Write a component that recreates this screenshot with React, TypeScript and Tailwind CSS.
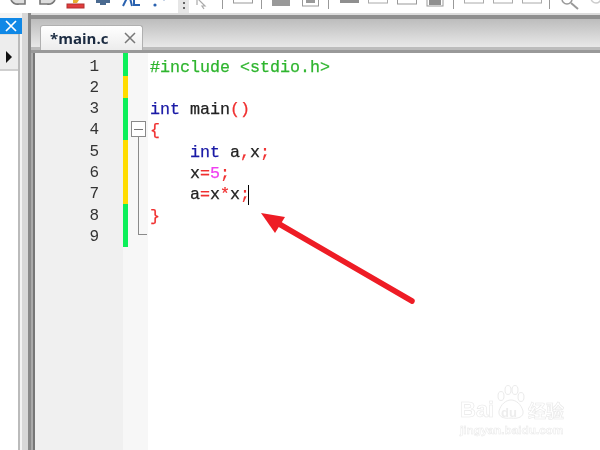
const K = ({ children }: { children: React.ReactNode }) => <span className="text-[#1a1aa6]">{children}</span>;
const R = ({ children }: { children: React.ReactNode }) => <span className="text-[#f03030]">{children}</span>;
const D = ({ children }: { children: React.ReactNode }) => <span className="text-[#222]">{children}</span>;

const rows: { n: number; bar: string; code: React.ReactNode }[] = [
  { n: 1, bar: "bg-[#0cf05a]", code: <span className="text-[#2fb52f]">#include &lt;stdio.h&gt;</span> },
  { n: 2, bar: "bg-[#ffdc00]", code: null },
  { n: 3, bar: "bg-[#0cf05a]", code: <><K>int</K> <D>main</D><R>()</R></> },
  { n: 4, bar: "bg-[#0cf05a]", code: <R>{"{"}</R> },
  { n: 5, bar: "bg-[#ffdc00]", code: <>{"    "}<K>int</K> <D>a</D><R>,</R><D>x</D><R>;</R></> },
  { n: 6, bar: "bg-[#ffdc00]", code: <>{"    "}<D>x</D><R>=</R><span className="text-[#f040f0]">5</span><R>;</R></> },
  {
    n: 7,
    bar: "bg-[#ffdc00]",
    code: (
      <>
        {"    "}<D>a</D><R>=</R><D>x</D><R>*</R><D>x</D><R>;</R>
        <span className="inline-block w-px h-[20px] -ml-[2px] bg-black align-middle" />
      </>
    ),
  },
  { n: 8, bar: "bg-[#0cf05a]", code: <R>{"}"}</R> },
  { n: 9, bar: "bg-[#0cf05a]", code: null },
];

function Toolbar() {
  return (
    <div className="h-[13px] shrink-0 bg-white flex items-end overflow-hidden relative">
      <svg width="600" height="13" viewBox="0 0 600 13" className="shrink-0" fill="none">
        <path d="M11 0 Q14 5 19 4 H25 V0" stroke="#777" strokeWidth="1.6" fill="#ddd" />
        <path d="M55 0 Q52 5 47 4 H40 V0" stroke="#777" strokeWidth="1.6" fill="#ddd" />
        <rect x="67" y="4" width="17" height="4" fill="#e23b3b" stroke="#b03030" />
        <path d="M73 0 H79 L77 3 H73 Z" fill="#e8b030" />
        <path d="M96 -1 H110 V3 H106 V5 H100 V3 H96 Z" fill="#4a6a90" />
        <path d="M123 6 L127 -2 M132 6 L130 -2 M134 -2 V5 H140" stroke="#2a62b0" strokeWidth="2" />
        <circle cx="155" cy="5" r="1.6" fill="#2a62b0" />
        <circle cx="164" cy="0" r="1" fill="#b8c8e0" />
        <path d="M197 -2 L205 6 L202 6 L204 9 M197 -2 V5" stroke="#aaa" strokeWidth="1.2" />
        <rect x="233.5" y="-4" width="19" height="7" stroke="#999" />
        <rect x="272" y="-4" width="18" height="10" fill="#999" />
        <rect x="302.5" y="-4" width="16" height="10" stroke="#999" fill="#fff" />
        <rect x="306" y="-4" width="9" height="7" fill="#999" />
        <rect x="340" y="-4" width="19" height="7" fill="#8f8f8f" />
        <rect x="368.5" y="-4" width="19" height="7" stroke="#aaa" />
        <rect x="397.5" y="-4" width="19" height="8" stroke="#999" />
        <rect x="427" y="-4" width="16" height="10" stroke="#999" />
        <rect x="429" y="-4" width="12" height="9" fill="#8f8f8f" />
        <rect x="464.5" y="-4" width="19" height="7" stroke="#aaa" />
        <rect x="493.5" y="-4" width="19" height="7" stroke="#aaa" />
        <rect x="522.5" y="-4" width="19" height="7" stroke="#aaa" />
        <circle cx="567" cy="-1" r="5" stroke="#999" strokeWidth="1.5" />
        <path d="M571 3 L578 9" stroke="#999" strokeWidth="2" />
        <circle cx="596" cy="-2" r="5" stroke="#ccc" strokeWidth="1.5" />
        <path d="M222.5 0 V9 M261.5 0 V9 M328.5 0 V9 M453.5 0 V9 M549.5 0 V9" stroke="#999" />
      </svg>
      <div className="absolute left-[178px] top-0 w-[11px] h-[13px] bg-[#e6e6e6] flex flex-col items-center pt-[2px] gap-[3px]">
        <div className="w-[2px] h-[2px] bg-[#666]" />
        <div className="w-[2px] h-[2px] bg-[#666]" />
      </div>
    </div>
  );
}

function Sidebar() {
  return (
    <div className="w-[31px] shrink-0 flex">
      <div className="w-[22px] shrink-0 flex flex-col bg-white">
        <div className="h-[5px] bg-[#f4f4f4]" />
        <div className="h-[16px] bg-[#1088e6] flex items-center justify-center">
          <svg width="12" height="12" viewBox="0 0 12 12"><path d="M1 1 L11 11 M11 1 L1 11" stroke="#fff" strokeWidth="1.7" /></svg>
        </div>
        <div className="flex-1 flex">
          <div className="w-[18px] bg-white flex flex-col">
            <div className="h-[37px] bg-[#ededed] flex items-center justify-center border-t border-[#ddd] border-b-2 border-b-[#cfcfcf] pt-[9px]">
              <svg width="8" height="12" viewBox="0 0 8 12"><path d="M1 0 L7 6 L1 12 Z" fill="#111" /></svg>
            </div>
          </div>
          <div className="w-[2px] bg-[#bbb]" />
          <div className="w-[2px] bg-[#f4f4f4]" />
        </div>
      </div>
      <div className="w-[6px] bg-[#d8d8d8]" />
      <div className="w-[3px] bg-[#8a8a8a]" />
    </div>
  );
}

function TabStrip() {
  return (
    <div className="h-[40px] shrink-0 flex flex-col">
      <div className="h-[2px] bg-[#dcdcdc]" />
      <div className="h-[4px] bg-[#8f8f8f]" />
      <div className="flex-1 bg-gradient-to-b from-[#bdbdbd] to-[#e8e8e8] flex items-end pl-[9px]">
        <div className="relative z-10 w-[103px] h-[25px] -mb-[3px] rounded-t-[3px] border border-b-0 border-[#b0b0b0] bg-gradient-to-b from-white to-[#ececec] flex items-center pl-[9px] pr-[6px] justify-between">
          <span className="font-['Open_Sans','Liberation_Sans',sans-serif] font-bold text-[15px] text-[#1a2a40]">*main.c</span>
          <svg width="12" height="12" viewBox="0 0 12 12"><path d="M1 1 L11 11 M11 1 L1 11" stroke="#777" strokeWidth="1.5" /></svg>
        </div>
      </div>
      <div className="h-[3px] bg-[#bcbcbc]" />
      <div className="h-[3px] bg-[#999]" />
    </div>
  );
}

function Editor() {
  return (
    <div className="flex-1 relative flex bg-white overflow-hidden">
      <div className="w-[2px] shrink-0 bg-[#aaa]" />
      <div className="w-[2px] shrink-0 bg-[#777]" />
      <div className="w-[88px] shrink-0 bg-[#f0f0f0] pt-[3.5px]">
        {rows.map((r) => (
          <div key={r.n} className="h-[21.3px] pr-[24px] text-right font-['Liberation_Mono',monospace] text-[16px] leading-[21.3px] text-[#333]">
            {r.n}
          </div>
        ))}
      </div>
      <div className="w-[5px] shrink-0 flex flex-col">
        {rows.map((r) => (
          <div key={r.n} className={`${r.bar} h-[21.3px] first:h-[23.3px]`} />
        ))}
        <div className="flex-1 bg-[#f7f7f7]" />
      </div>
      <div className="w-[20px] shrink-0 bg-[#f7f7f7]" />
      <div className="pl-[2px] pt-[3.5px]">
        {rows.map((r) => (
          <div key={r.n} className="h-[21.3px] whitespace-pre font-['Liberation_Mono',monospace] text-[16.67px] leading-[21.3px] [-webkit-text-stroke:0.25px]">
            {r.code}
          </div>
        ))}
      </div>
      <div className="absolute left-[100px] top-[68px] w-[15px] h-[16px] border border-[#8a8a8a] bg-white flex items-center justify-center">
        <div className="w-[9px] h-px bg-[#777]" />
      </div>
      <div className="absolute left-[107px] top-[84px] w-[9px] h-[98px] border-l border-b border-[#8a8a8a]" />
    </div>
  );
}

function Watermark() {
  return (
    <div className="absolute left-[460px] top-[385px] w-[108px] h-[52px] select-none pointer-events-none">
      <svg className="absolute left-[36px] top-0" width="30" height="34" viewBox="0 0 30 34" fill="#fff" stroke="#ebebeb" strokeWidth="1">
        <ellipse cx="5" cy="11" rx="3" ry="4.5" />
        <ellipse cx="12" cy="5" rx="3" ry="4.5" />
        <ellipse cx="19" cy="5" rx="3" ry="4.5" />
        <ellipse cx="25" cy="12" rx="3" ry="4.5" />
        <path d="M3 26 C5 19 10 15 15 15 C20 15 25 19 27 26 C28 32 22 34 15 33 C8 34 2 32 3 26 Z" />
      </svg>
      <span className="absolute left-0 top-[14px] font-['Liberation_Sans',sans-serif] font-bold text-[22px] leading-[22px] text-white [-webkit-text-stroke:0.6px_#e8e8e8]">Bai</span>
      <span className="absolute left-[41px] top-[21px] font-['Liberation_Sans',sans-serif] font-bold text-[13px] leading-[14px] text-[#ededed]">du</span>
      <span className="absolute left-[68px] top-[14px] font-['Noto_Sans_CJK_SC',sans-serif] font-bold text-[18px] leading-[22px] text-white [-webkit-text-stroke:0.6px_#e8e8e8]">经验</span>
      <span className="absolute left-0 top-[39px] font-['Liberation_Sans',sans-serif] font-bold text-[11.8px] leading-[13px] text-white [-webkit-text-stroke:0.5px_#e8e8e8]">jingyan.baidu.com</span>
    </div>
  );
}

export default function App() {
  return (
    <div className="w-[600px] h-[450px] relative overflow-hidden flex flex-col bg-white blur-[0.35px]">
      <Toolbar />
      <div className="flex-1 flex min-h-0">
        <Sidebar />
        <div className="flex-1 flex flex-col min-w-0">
          <TabStrip />
          <Editor />
        </div>
      </div>
      <Watermark />
      <svg className="absolute left-0 top-0 pointer-events-none" width="600" height="450" viewBox="0 0 600 450">
        <path d="M412 301 L274 221" stroke="#ee1c25" strokeWidth="5.5" strokeLinecap="round" />
        <path d="M261 213 L285 217 L275 233 Z" fill="#ee1c25" />
      </svg>
    </div>
  );
}
